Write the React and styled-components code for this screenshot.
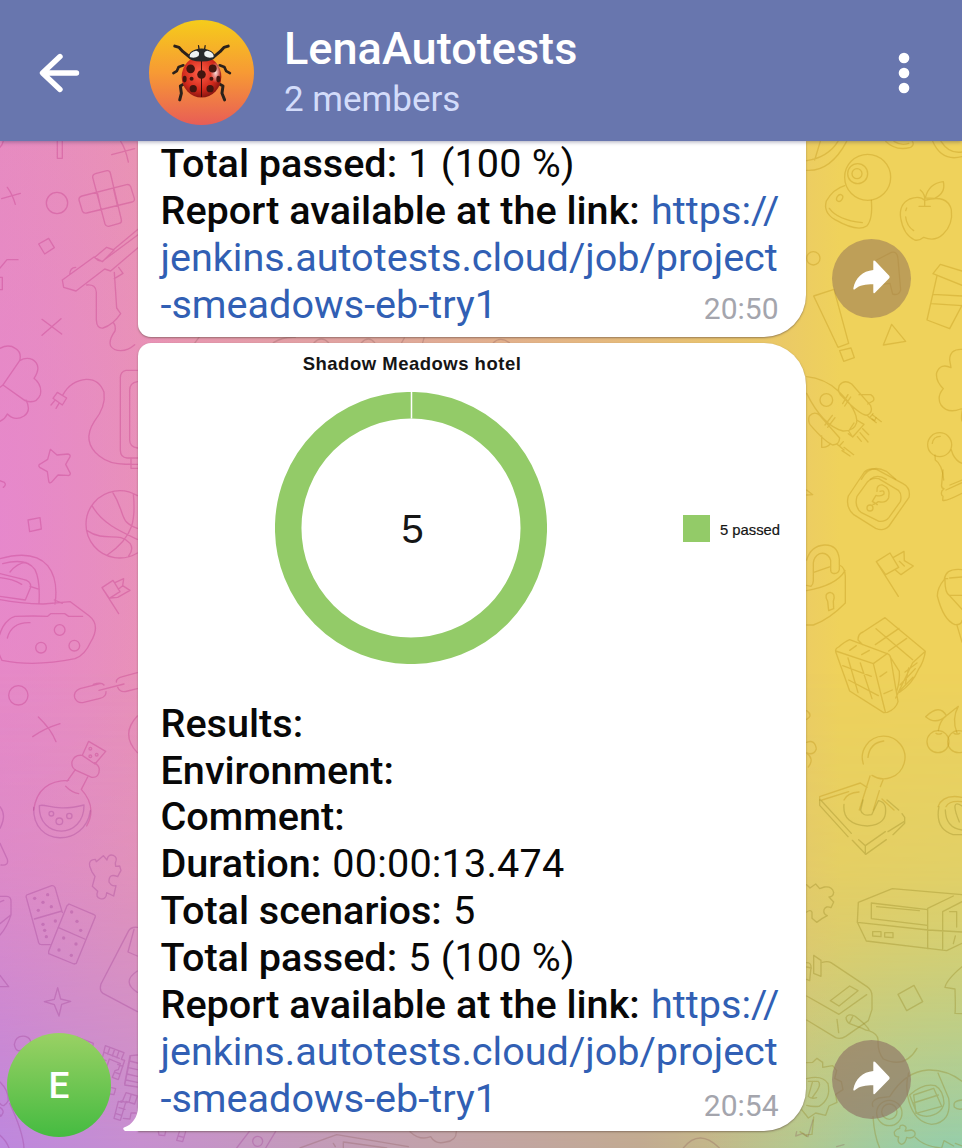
import React from "react";
import styled, { createGlobalStyle } from "styled-components";

const GlobalStyle = createGlobalStyle`
  * { box-sizing: border-box; }
  body { margin: 0; font-family: Roboto, "Liberation Sans", sans-serif; }
`;

const Screen = styled.div`
  width: 962px;
  height: 1148px;
  overflow: hidden;
  display: flex;
  flex-direction: column;
`;

const Header = styled.header`
  position: relative;
  z-index: 1;
  flex: none;
  height: 141px;
  padding: 4px 52.5px 0 38px;
  display: flex;
  align-items: center;
  color: #fff;
  background: #6876ae;
  box-shadow: 0 1px 4px rgba(40, 40, 80, 0.4);
`;

const HeaderAvatar = styled.div`
  width: 105px;
  height: 105px;
  margin-left: 69px;
  border-radius: 50%;
  overflow: hidden;
  background: linear-gradient(#f5cc1b, #f79a34 50%, #e85d56);
`;

const Titles = styled.div`
  flex: 1;
  margin-left: 30px;
  display: flex;
  flex-direction: column;
`;

const Title = styled.h1`
  margin: 0;
  font-size: 45.1px;
  line-height: 53px;
  font-weight: 500;
  white-space: nowrap;
`;

const Subtitle = styled.span`
  font-size: 35px;
  line-height: 49px;
  color: #d3dcfa;
`;

const Chat = styled.main`
  position: relative;
  flex: 1;
  display: flex;
  flex-direction: column;
  gap: 6px;
  background:
    radial-gradient(ellipse 190px 520px at 0 38%, rgba(230, 134, 210, 0.7), rgba(230, 134, 210, 0)),
    linear-gradient(to right, #e78cbd, #e993b4 140px, #dfa69d 380px, #e9c66a 760px, #efd25b 840px);

  &::before {
    content: "";
    position: absolute;
    inset: 0;
    background:
      radial-gradient(ellipse 260px 300px at 100% 104%, rgba(140, 206, 178, 0.9), rgba(150, 200, 150, 0)),
      linear-gradient(to right, #bd87de, #c68fd0 140px, #c1a0ae 400px, #c1aa92 640px, #c6c580 800px, #b4ca90);
    mask-image: linear-gradient(transparent 52%, rgba(0, 0, 0, 0.22) 72%, rgba(0, 0, 0, 0.65) 88%, #000);
  }
`;

const Wallpaper = styled.svg`
  position: absolute;
  inset: 0;
  width: 962px;
  height: 1007px;
`;

const Doodles = styled.g`
  fill: none;
  stroke: ${(p) => p.$ink};
  stroke-width: 4;
  stroke-linecap: round;
  stroke-linejoin: round;
`;

const MessageRow = styled.div`
  position: relative;
  display: grid;
  grid-template-columns: 138px 668px 1fr;
  align-items: end;
`;

const Bubble = styled.article`
  position: relative;
  grid-column: 2;
  background: #fff;
  border-radius: ${(p) => (p.$photo ? "13px 42px 42px 0" : "0 0 42px 13px")};
  box-shadow: 0 1px 2px rgba(90, 70, 60, 0.55);
`;

const Tail = styled.svg`
  position: absolute;
  left: -15px;
  bottom: 0;
`;

const Caption = styled.div`
  padding: 0 27.5px 9px 22.5px;
  font-size: 39.6px;
  line-height: 46.85px;
  color: #080808;
  white-space: nowrap;
`;

const Line = styled.div`
  display: flex;
  justify-content: space-between;
  white-space: pre;
`;

const Label = styled.b`
  font-weight: 500;
`;

const Value = styled.span`
  margin-left: 1.2px;
  letter-spacing: 0.18px;
`;

const Link = styled.a`
  color: #315fb4;
  text-decoration: none;
`;

const InlineLink = styled(Link)`
  margin-left: 1.5px;
`;

const Time = styled.time`
  height: 46px;
  padding-top: ${(p) => p.$drop}px;
  font-size: 30px;
  line-height: 46px;
  color: #a4a5ad;
`;

const Report = styled.section`
  height: 357.4px;
  padding-top: 8px;
  font-family: "Liberation Sans", Arial, sans-serif;
  color: #151515;
`;

const ReportTitle = styled.h2`
  width: 548px;
  margin: 0;
  text-align: center;
  font-size: 18.5px;
  line-height: 25px;
  letter-spacing: 0.5px;
`;

const ChartRow = styled.div`
  display: flex;
  align-items: center;
  margin-top: 16px;
  padding-left: 137px;
`;

const Donut = styled.div`
  position: relative;
  width: 272px;
  height: 272px;
  padding: 2px 0 0 3px;
  display: flex;
  align-items: center;
  justify-content: center;
  font-size: 40px;
  line-height: 1;
`;

const Ring = styled.svg`
  position: absolute;
  inset: 0;
`;

const Legend = styled.div`
  display: flex;
  align-items: center;
  margin-left: 136px;
  gap: 10px;
`;

const LegendText = styled.span`
  padding-top: 3px;
  font-size: 14.8px;
  line-height: 24px;
  -webkit-text-stroke: 0.2px #151515;
`;

const Swatch = styled.span`
  width: 27px;
  height: 27px;
  background: #93cb68;
`;

const SenderAvatar = styled.div`
  width: 104px;
  height: 104px;
  margin: 0 0 -6px 7px;
  border-radius: 50%;
  display: flex;
  align-items: center;
  justify-content: center;
  color: #fff;
  font-size: 37px;
  font-weight: 500;
  background: linear-gradient(#9ad164, #45bb41);
`;

const ShareButton = styled.button`
  grid-column: 3;
  width: 79px;
  height: 79px;
  margin: 0 0 ${(p) => p.$lift}px 26px;
  padding: 0;
  border: 0;
  border-radius: 50%;
  background: ${(p) => p.$tone};

  svg {
    display: block;
  }
`;

const BackIcon = () => (
  <svg width="42" height="42" viewBox="0 0 42 42" fill="none" stroke="#fff" strokeWidth="5.4" strokeLinecap="round" strokeLinejoin="round">
    <path d="M22 4.500 4.500 21 22 37.500M5 21H38.500" />
  </svg>
);

const MenuIcon = () => (
  <svg width="12" height="42" viewBox="0 0 12 42" fill="#fff">
    <circle cx="6" cy="6" r="5.300" />
    <circle cx="6" cy="21" r="5.300" />
    <circle cx="6" cy="36" r="5.300" />
  </svg>
);

const ShareIcon = () => (
  <svg width="79" height="79" viewBox="0 0 79 79" fill="#fff">
    <path d="M41.300 22.800c0-1.500 1-1.700 1.900-.7l14 14.700q1 1.200 0 2.400L43.200 53.600c-.9 1-1.900.7-1.900-.7v-7.600c-8 0-13.500.9-18.200 4.700-1.300 1-2 .5-1.700-1C23.200 39.500 30.500 32 41.300 31.100z" />
  </svg>
);

const Ladybug = () => (
  <svg width="105" height="105" viewBox="446 59 318 318">
    <defs>
      <radialGradient id="shell" cx="0.45" cy="0.4" r="0.68">
        <stop offset="0" stopColor="#ff6048" />
        <stop offset="0.6" stopColor="#d32a1c" />
        <stop offset="1" stopColor="#6d0d0c" />
      </radialGradient>
      <radialGradient id="shine">
        <stop offset="0" stopColor="#fff" stopOpacity="0.85" />
        <stop offset="1" stopColor="#fff" stopOpacity="0" />
      </radialGradient>
    </defs>
    <g fill="none" stroke="#2b211a" strokeWidth="9" strokeLinecap="round" strokeLinejoin="round">
      <path d="M524 138l13 4 12 13 20 16M686 138l-13 4-12 13-19 16" />
      <path d="M550 196l-14 5-6 13-10 6M660 196l14 5 6 13 11 6" strokeWidth="8" />
      <path d="M553 252l-12 7 3 22-5 20M658 252l12 7-3 22 8 20" strokeWidth="9" />
      <path d="M598 150l-2-13M614 150l2-13" strokeWidth="4" />
    </g>
    <ellipse cx="605" cy="231" rx="60" ry="63" fill="url(#shell)" />
    <ellipse cx="648" cy="218" rx="16" ry="32" fill="url(#shine)" />
    <path d="M605 182V292" stroke="#3a0a08" strokeWidth="3" />
    <g fill="#42150f">
      <circle cx="605" cy="224" r="13" />
      <circle cx="572" cy="207" r="13" />
      <circle cx="639" cy="206" r="12" />
      <ellipse cx="554" cy="238" rx="6" ry="10" />
      <ellipse cx="656" cy="238" rx="6" ry="10" />
      <circle cx="575" cy="237" r="6" />
      <circle cx="635" cy="237" r="6" />
      <circle cx="580" cy="267" r="11" />
      <circle cx="631" cy="267" r="11" />
    </g>
    <path d="M565 172q1-17 20-23 20-8 40 0 20 7 21 23-3 12-41 13-37-1-40-13z" fill="#26282b" />
    <path d="M569 169q1-14 20-17 13 3 7 16-10 8-25 4zM642 169q-1-14-20-17-13 3-7 16 10 8 25 4z" fill="#eef2f3" />
  </svg>
);

const PINK = "rgba(190, 40, 125, 0.3)";
const MAUVE = "rgba(150, 50, 140, 0.29)";
const GOLD = "rgba(190, 145, 20, 0.35)";
const OLIVE = "rgba(145, 130, 30, 0.33)";
const SAND = "rgba(140, 90, 90, 0.3)";

const ChatWallpaper = () => (
  <Wallpaper viewBox="0 141 962 1007" aria-hidden="true">
    <g transform="translate(0 140) scale(.33333)">
      <Doodles $ink={PINK}>
        <path d="M172 0v55h15V0M0 22q8-8 10-20M335 44l69-18M362 4q14 20 23 62M5 176l56-16M22 142q15 20 24 51" />
        <circle cx="171" cy="189" r="32" />
        <path d="M289 100l32-8q8-1 10 7l33 140q2 9-6 11l-32 9q-8 1-11-7L278 112q-1-9 11-12zM246 168l134-34q9-2 12 6l11 35q2 9-7 11l-136 33q-10 2-13-6l-10-33q-1-9 9-12zM292 157l11 51M340 144l12 51" />
        <path d="M116 312l30-17 17 28-29 19zM0 384l21-25h33M0 412h7v37H0M126 586l57-50M126 538l59 44" />
        <path d="M187 420l95-69 12 10 13 3L414 284M284 352l36-30 22 8-35 35-17-9M342 328l72-60M187 420l4 22 37 11 86-66 18 6 82-70M209 404q1-22 18-22M260 435q28-3 29 22v82q1 28 20 25 30-9 53-43l-12-17-7-107M343 416l26-16-13-18M341 549q7 9 4 24-20 28-13 45 9 14 30 14 23-1 42-18" />
        <path d="M9 735l50-73q7-25-13-37-20-14-46 0M59 662q20-12 39-3 29 19 4 56 25 20 19 49-13 30-46 18L9 735M78 780q17 32-6 48-27 17-50-6-7 15-22 22M0 742l9-7" />
        <path d="M172 757l28 17-13 21-28-20zM164 782l-11 13M177 790l-9 15M189 764q23-42 70-46 39-1 53 39 6 43-29 87-39 61 15 104 35 29 96 24M412 691h-34q-17 4-17 22v217q0 22 20 24h32M412 725q-23 4-23 26v150q0 20 24 23M393 954v31h20M393 973h20" />
        <path d="M151 928l20 17 33-3q10 3 5 10l-12 21 14 27q-1 8-9 6l-28-1-20 22q-6 5-8-4l-4-28-23-13q-6-7 2-10l22-14z" />
      </Doodles>
    </g>
    <g transform="translate(0 470) scale(.33333)">
      <Doodles $ink={PINK}>
        <path d="M0 32l13 5q7 8-3 15M84 150l36-7 4 34-35 8z" />
        <path d="M412 77a101 101 0 1 0 0 172M337 65c42 67 18 90 75 110M400 71c7 74 4 128-78 184M276 107c30 53 84 77 136 101M260 181c58 39 95 0 130 39 10 14 6 25-4 38" />
        <path d="M0 266q101-28 143 21 33 41 22 115M8 281q72-19 97 18 16 32 12 101M30 306q21-27 48-29M0 311l70 17q24 5 22 24l-16 38M0 323q39 4 65 20M90 349l28 9M76 390L0 379M0 389q60 12 130 13l81-7 56 42q36 28 5 79-18 40-47 50-122 25-219 5Q-20 525 9 470q15-25 36-31 60-2 98 0l9-8h42l12 8h42M22 504q13-48 68-46M163 390l24 10" />
        <circle cx="179" cy="480" r="16" />
        <circle cx="123" cy="533" r="16" />
        <circle cx="223" cy="527" r="16" />
        <path d="M306 353l33-22 21 34-32 20zM306 353l50 78M345 338l26-12-3 21 22 14-37 21-22 2M355 358l13-11" />
        <path d="M300 641l-60 15q-20 8-16 27 8 18 27 14l49-12q19-4 18-20M280 643q24-8 32 2M297 661l75-19M412 608l-44 12q-20 5-19 16M353 652q8 18 30 11l29-7" />
        <circle cx="55" cy="676" r="29" />
        <path d="M98 800q36-25 82-39M115 741q38 36 53 74M412 738q-52 55 0 110" />
        <path d="M266 814l51 30-32 38-38-26zM247 856q-24-3-31 19-3 19 14 27l45 20q23 2 23-24-1-11-14-20M226 899l-25 35M263 921l-19 37M244 958q48 53 16 110M206 931q-93 0-105 89M197 949q20 20 39 22" />
        <circle cx="271" cy="836" r="4" />
        <circle cx="290" cy="854" r="4" />
        <circle cx="271" cy="859" r="4" />
      </Doodles>
    </g>
    <g transform="translate(0 800) scale(.33333)">
      <Doodles $ink={MAUVE}>
        <path d="M101 22c-5 120 155 120 170 10M118 17c20-8 47 20 134-2 1 104-138 104-134 2z" />
        <circle cx="154" cy="41" r="7" />
        <circle cx="208" cy="48" r="8" />
        <circle cx="178" cy="64" r="10" />
        <path d="M0 20q21 27 0 65M0 130l22 48q5 20-19 17M0 289h20q14 0 13 18v37q-10 35-33 61M0 371l33-27M0 306l11-5" />
        <path d="M269 198q-4-19 17-20l3 7 21-18 11 13q3-19 19-14 14 6 6 23l1 10 12-1 4 13-10 19q-27-12-26 16 8 14 21 11l-7 31-21-10q-1 22-19 18-15-4-8-22l-16-15 8-30-10-15z" />
        <path d="M150 434l-25 0q-7 0-9-6L79 293q-3-8 6-10l70-26q6-1 10 5l22 76M103 357l83-24M207 312l75 32q5 2 4 6l-57 140-7 2-76-31v-7l55-137zM174 382l80 35" />
        <path d="M133 605l30-7 10-35 9 34 30 7-27 9-8 35-14-34zM0 526l26 34H0M412 382q-20-2-27 12l-82 158q-6 20 6 28l103 55M402 388l-18 68 28 12M412 513q-49 32 0 64" />
        <path d="M77 744q-29 21-34-11 4-28 33-24 17 5 16 21M0 846q26 25 25 56-14 25-25 8M0 922q15 10 6 22-5 10-6 0M29 910q40 86 43 134M0 1006q18 15 27 38M232 711l48 19-5 24" />
        <path d="M316 737l56 21-8 20 10 3-19 58-18-7 8-20 10-3 6-18-33-14-12 37-17-6zM330 742l-7 20M344 748l-7 20M357 753l-7 20M313 757l45 18M305 777l13 5M353 793l16 6M347 818l12 4M412 765l-20 2-18 88 38 6M389 783l23 6M385 803l27 6M381 822l31 7M378 840l34 7M390 767l-16 84M378 878l34 10-8 24-26-8-17 57-19-6 13-51 11 3zM363 903l18 5M357 923l18 5M348 941l17 5M393 885l-6 22M335 863l12 3-5 18-12-2M370 955l20 2 3-18h15" />
      </Doodles>
      <g fill={MAUVE}>
        {[[104, 295], [143, 284], [129, 307], [115, 331], [154, 320], [129, 373], [166, 363], [134, 391], [139, 410], [215, 336], [231, 364], [242, 391], [191, 414], [228, 432], [177, 450], [214, 466]].map(([x, y]) => (
          <circle key={x + "-" + y} cx={x} cy={y} r="5" />
        ))}
      </g>
    </g>
    <g transform="translate(100 1080) scale(.33333)">
      <Doodles $ink={MAUVE}>
        <path d="M175 155l2 10 17 2 3-12M238 155l-8 26 18 4 9-30M234 168l18 4M410 204l38-50M497 204l30-50" />
        <circle cx="473" cy="184" r="15" />
      </Doodles>
      <Doodles $ink={SAND}>
        <path d="M600 204l110-40 215 36M730 204v-18l130 18M930 155q30 28 62 15 15 25 45 16 32-4 32-31M700 190l6 10" />
      </Doodles>
    </g>
    <g transform="translate(640 1030) scale(.33333)">
      <Doodles $ink={SAND}>
        <path d="M130 354q48-60 108 0M470 305l-3 13 22-8 15 10 15-50M590 350l22-6" />
      </Doodles>
    </g>
    <g transform="translate(130 280) scale(.33333)">
      <Doodles $ink={SAND}>
        <path d="M195 188l12-16M430 188q30-18 66-16M552 188q22-22 44 0M694 188q22-22 40 0M815 188l8-14M878 188l4-14M1090 188q20-20 48 0" />
      </Doodles>
    </g>
    <g transform="translate(800 140) scale(.33333)">
      <Doodles $ink={GOLD}>
        <path d="M140 4C108 64 70 94 20 91M114 4q-30 48-94 58M61 4L44 60M257 4q30 30 75 18 12-8 5-18M282 4q22 14 44 6M398 4q27 62 88 46M423 4q24 38 63 32" />
        <circle cx="203" cy="112" r="69" />
        <circle cx="173" cy="101" r="30" />
        <circle cx="171" cy="101" r="15" />
        <path d="M134 137q-34 10-55 46-10 35 26 56 67 38 95 19 19-20 14-77M88 205q25 35 99 43" />
        <ellipse cx="119" cy="174" rx="8" ry="11" transform="rotate(35 119 174)" />
        <path d="M374 181q-15-15-45-4-33 16-27 57 8 50 42 66 15 3 27-8 34 14 58-9 31-29 25-74-12-47-80-28zM357 199h34M374 199v-18q2-18-13-31M376 174q10-44 54-49 8 34-26 50zM317 212l3-8M317 231q3 27 24 41" />
        <circle cx="40" cy="355" r="20" />
        <path d="M41 468l61-20 44 162-32 12zM119 632l34-8 10 29-32 11zM275 553l42 51-67 11zM230 360l44-23q18-5 20 20l8 93q-5 18-24 12l-8-32-42 5" />
        <path d="M421 373l65 20M421 373l-22 28 87 35M411 407l-30 133 68 26 37-70M399 463l87 5M394 491l92 6" />
        <path d="M20 710q53 5 94 42 60 58 56 96-8 26-41 25Q68 857 20 760M118 736q15-19 37-4l57 65q8 20-11 29-21-1-73-55-18-14-10-35zM28 828q15-16 31-2l60 68q-1 20-21 21-24-10-68-61-7-12-2-26zM75 855l22-29M83 862l22-29M128 791l16-27M134 798l18-27M177 764h35q15 10 7 19l-16 9M65 888v34q18 1 26-11M170 840l22 13-34 38-12-18 16-24M158 891l-13-10M201 825l8 8 10-12M208 832l16 10 4-9M110 912l8 6 12-13M118 918l14 12" />
        <circle cx="79" cy="780" r="19" />
        <path d="M218 825l26 20M216 838l13 10M188 866l18 18M180 878l24 28M172 890l12 14M132 922l29 22M126 932l24 16" />
        <path d="M486 628q-37-2-37 32l4 23q-31-15-43 15-4 25 20 48-21 24-7 49 20 27 59 12 8-2 4 10-3 20 0 26" />
        <circle cx="419" cy="914" r="36" />
        <path d="M397 910q3-21 24-21M405 945l1 15q21 13 25 60M454 930l5 14q10 20 27 26M184 1018q26-49 75-24l28 24M211 1018q20-18 48 0" />
      </Doodles>
    </g>
    <g transform="translate(800 470) scale(.33333)">
      <Doodles $ink={GOLD}>
        <path d="M145 78l48-72q15-14 38-7l78 42q24 13 18 41l-60 86q-16 17-40 7l-67-42q-24-22-15-55z" />
        <path d="M171 79l32-44q13-13 33-9l59 35q12 12 6 34l-34 47q-11 14-30 12l-54-27q-21-17-12-48z" />
        <path d="M231 64q-2-21 17-19 25 10 18 38-8 18-31 12-13 9-16 8M240 64q14-5 12 8-9 9-24 4l-11 18 15 10" />
        <circle cx="210" cy="114" r="9" />
        <path d="M20 60l18 14-18 1M429 0l-4 43q-2 11 7 13l-6 6q-5 13 3 17l-1 12q10 4 58-21M450 45l36-15M438 60l48-22" />
        <path d="M20 270q12-42 53-45 40-2 45 42v32q-4 14-19 11-8-3-7-12v-27q-9-26-33-20-17 8-19 28v53q0 10-7 17l-13-3M20 362q90-16 115-60M118 285q18 8 18 34v80q-48 49-96 66h-20M41 307l50-17" />
        <path d="M83 394q-13-23 7-27 18 3 10 27l1 22-15 6z" />
        <path d="M229 275l41-26 26 43-39 22zM229 275l66 104M279 263l33-19 1 28 27 16-37 26-16-13M298 274l15 14" />
        <path d="M174 510q0-19 15-24l66-43 121 101q-4 30-21 55-19 44-57 68M149 509L263 552q8 3 9 12l22 131q-6 22-32 32l-11 1-102-65-42-118q-2-9 9-14 18-16 33-22zM174 510l14 14M270 560l28 44q2 30-8 60M107 543l113 38 36 145M220 581l43-31M228 476l110 93M376 544l-38 34-51 106M226 524l71-49M266 543l54-38M144 564l30 104M181 579l35 107M128 587l86 32M146 630l89 47M149 541l20-14M185 554l23-13M240 620l20-14M252 671l25-11M315 606l36-27M300 645l46-49M295 667l44-45M326 594l-10 48" />
        <path d="M377 740q42-40 62-3-32 29-62 3zM439 737l36-28M475 709q-21 37-4 80M439 737q-20 15-24 45M408 790q8 5 17 0M462 790q8 5 17 0" />
        <circle cx="414" cy="815" r="33" />
        <circle cx="476" cy="815" r="33" />
        <path d="M486 299q-49-5-53 29-21 25-21 50 18 72 53 86 20 1 21-13M443 326h-8q-1 42 13 50l38 42M448 376h38M449 324l37-3M471 466l15 50M20 722q20 14 0 26M20 817q25-10 29 20-8 20-29 12 24 18 5 42" />
        <path d="M190 882a64 64 0 1 1 26 34M204 862q5-43 47-49M210 918l-32 102M249 930l-8 20M238 962l-18 58M59 980l122-41 20 13M59 980v10M66 990l80-25M246 987l36 33M132 990q10-22 45-24M414 1010q15-39 72-28M438 1010q9-19 48-15" />
      </Doodles>
    </g>
    <g transform="translate(800 800) scale(.33333)">
      <Doodles $ink={OLIVE}>
        <path d="M59 0v16l85 94M62 0l92 100M132 13q-6 60 70 65 62-3 54-58-4-14-20-18M189 0l-7 30q4 20 33 14l20-42M261 0l35 30M306 41l8 11v18l-35 34M259 119l-62 44-40-42M196 137l60-42M196 137v26M196 137l-20-18M312 65l-48 30M417 20q-13 66 42 84h27M436 30q1 53 50 60M486 18q-38-25-8 48" />
        <path d="M20 254l10 10 17-12 12 14 14-5q23-3 28 16-1 13-14 14l14 15-8 17q-15-7-21 6-3 14 10 18l-15 8-17 12-14-12v-18q-4-10-16-1" />
        <path d="M175 307l102-41 209 18M175 307l-3 60 27 56 241 29 46-22M172 367l213 23 101 6M383 325v121M383 325l77-37M428 335l58-30M428 335v112M214 309l169 20M214 309v47l169 20M230 320l128 12M218 395h25v15l-25-2zM254 398h25v15l-25-2zM449 335h21v46M466 408l-6 23" />
        <path d="M20 488q14 0 13 14l-4 40-9-4M20 501l14 3M41 466v54l22 9V481zM67 487q16-5 26 1l108 72q15 10 15 28v40l-11 34-68 47q-16 10-30 4L20 660M20 588l97 55 83-59M91 602l58-44 25 14-57 46zM111 658l5 40" />
        <path d="M164 648q-20-9-26 5 1 13 13 19l36 13q13 8 21 7-4-14-44-44zM158 650l-9 18M207 692q29 11 27 30-1 34 16 55 65 30 101-32" />
        <path d="M294 583l48-27 26 49-48 27zM486 500q-47 40-51 62l30 5q2 60 0 73l21 1" />
        <path d="M20 788l18-1 13-12 17 12v15l30-5 12 15-6 23 20 10 5 24-22 14 4 24-24 11-10 28-30-7-22 15-20-25M20 836q47-12 64 15 10 46-27 68-20 2-37-3M25 844h29q10 8-2 27l-16 23M37 847l-12 42q8 9 25 4M20 1004l16-1 5-52M0 995l20 14" />
        <path d="M219 950q4 58 20 94M219 920q-8-18 17-26l33-4q47-76 115-80 56-2 102 34M326 819q-12 38 1 86 18 62 68 68 61-6 51-78l-32-76M329 885q40-36 77-28 24 14 26 53-7 34-52 39-23-2-30-10zM341 885l60-20 24 54-77 21zM340 909l75-24" />
        <circle cx="268" cy="939" r="38" />
        <circle cx="268" cy="935" r="23" />
        <path d="M486 900q-29 2-23 21 9 9 23 6M299 985q0-12 12-9 12 4 4 17l19-3q15 4 10 17-8 11-24 5-3 18-16 21-14-5-8-22-14 0-13-15 6-10 16-11M346 1012q24 26 75 32M425 1044l7-22 29 16M466 1030l20 8" />
      </Doodles>
    </g>
  </Wallpaper>
);

const Field = ({ name, value }) => (
  <Line>
    <span>
      <Label>{name}:</Label>
      {value && <Value> {value}</Value>}
    </span>
  </Line>
);

const ReportLink = ({ time, drop }) => (
  <>
    <Line>
      <span>
        <Label>Report available at the link:</Label> <InlineLink>https://</InlineLink>
      </span>
    </Line>
    <Line>
      <Link>jenkins.autotests.cloud/job/project</Link>
    </Line>
    <Line>
      <Link>-smeadows-eb-try1</Link>
      <Time $drop={drop}>{time}</Time>
    </Line>
  </>
);

export default function App() {
  return (
    <Screen>
      <GlobalStyle />
      <Header>
        <BackIcon />
        <HeaderAvatar>
          <Ladybug />
        </HeaderAvatar>
        <Titles>
          <Title>LenaAutotests</Title>
          <Subtitle>2 members</Subtitle>
        </Titles>
        <MenuIcon />
      </Header>
      <Chat>
        <ChatWallpaper />
        <MessageRow>
          <Bubble>
            <Caption>
              <Field name="Total passed" value="1 (100 %)" />
              <ReportLink time="20:50" drop={4} />
            </Caption>
          </Bubble>
          <ShareButton $lift={19} $tone="rgba(155, 122, 86, 0.58)" aria-label="Share">
            <ShareIcon />
          </ShareButton>
        </MessageRow>
        <MessageRow>
          <SenderAvatar>E</SenderAvatar>
          <Bubble $photo>
            <Tail width="16" height="24" viewBox="0 0 16 24">
              <path d="M16 0H15C15 10 9 18 1 20.500q-2 1.500 1 3.500H16z" fill="#fff" />
            </Tail>
            <Report>
              <ReportTitle>Shadow Meadows hotel</ReportTitle>
              <ChartRow>
                <Donut>
                  <Ring width="272" height="272" viewBox="0 0 272 272">
                    <circle cx="136" cy="136" r="122.800" fill="none" stroke="#93cb68" strokeWidth="26.500" />
                    <path d="M136.500 0V26.500" stroke="#fff" strokeWidth="1.500" />
                  </Ring>
                  5
                </Donut>
                <Legend>
                  <Swatch />
                  <LegendText>5 passed</LegendText>
                </Legend>
              </ChartRow>
            </Report>
            <Caption>
              <Field name="Results" />
              <Field name="Environment" />
              <Field name="Comment" />
              <Field name="Duration" value="00:00:13.474" />
              <Field name="Total scenarios" value="5" />
              <Field name="Total passed" value="5 (100 %)" />
              <ReportLink time="20:54" drop={7} />
            </Caption>
          </Bubble>
          <ShareButton $lift={12} $tone="rgba(142, 112, 100, 0.64)" aria-label="Share">
            <ShareIcon />
          </ShareButton>
        </MessageRow>
      </Chat>
    </Screen>
  );
}
